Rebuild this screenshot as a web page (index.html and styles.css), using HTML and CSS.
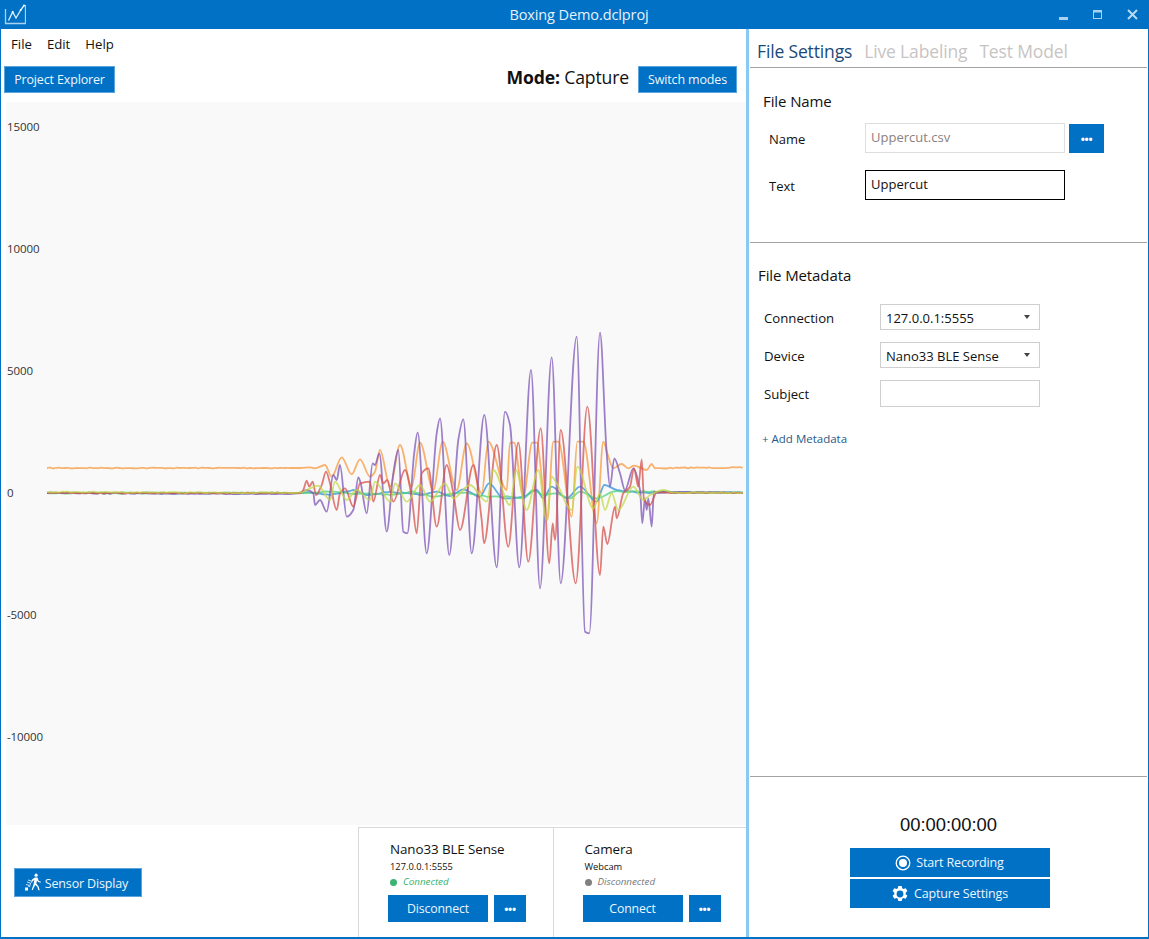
FILE: index.html
```html
<!DOCTYPE html>
<html lang="en">
<head>
<meta charset="utf-8">
<title>Boxing Demo.dclproj</title>
<link rel="stylesheet" href="styles.css">
</head>
<body>
<div class="window">
  <header class="titlebar">
    <svg class="logo" width="22" height="21" viewBox="0 0 22 21" fill="none">
      <path d="M1.500 5v14.500h20V1" stroke="#a8d2f0" stroke-width="1.300"/>
      <path d="M4.500 16.500 8.700 8 12 14l4.700-8L20 1.500" stroke="#e4f1fb" stroke-width="1.300"/>
      <circle cx="8.700" cy="8" r="1" fill="#fff"/><circle cx="16.700" cy="6" r="1" fill="#fff"/><circle cx="20" cy="1.500" r="1" fill="#fff"/>
    </svg>
    <div class="title">Boxing Demo.dclproj</div>
    <div class="winctrls">
      <svg width="10" height="10" viewBox="0 0 10 10"><rect x="0" y="7" width="9" height="3" fill="#a8d2f0"/></svg>
      <svg width="10" height="10" viewBox="0 0 10 10" fill="none" stroke="#a8d2f0"><rect x=".5" y=".5" width="8" height="8"/><rect x="0" y="0" width="9" height="2.500" fill="#a8d2f0" stroke="none"/></svg>
      <svg width="11" height="11" viewBox="0 0 11 11" fill="none" stroke="#b8daf3" stroke-width="2"><path d="M1 1l9 9M10 1l-9 9"/></svg>
    </div>
  </header>
  <main class="content">
    <section class="left">
      <nav class="menu"><span>File</span><span>Edit</span><span>Help</span></nav>
      <div class="toolbar">
        <button class="btn bordered explorer">Project Explorer</button>
        <div class="mode"><b>Mode:</b> Capture</div>
        <button class="btn bordered switch">Switch modes</button>
      </div>
      <div class="chart">
        <div class="axis"><span>15000</span><span>10000</span><span>5000</span><span>0</span><span>-5000</span><span>-10000</span></div>
        <svg id="plot" class="plot" width="740" height="723" viewBox="6 102 740 723"></svg>
      </div>
      <div class="bottom">
        <button class="btn bordered sensor">
          <svg width="18" height="20" viewBox="0 0 18 20" fill="#fff">
            <g transform="translate(2 0) scale(.88)">
              <circle cx="11.500" cy="2.500" r="1.800"/>
              <path d="M10 5h3l1.500 4 2.500 1-.5 1-3-1-1-1.500-.8 3.500 2.800 3.500 1 4h-1.500l-1-3.500-2.500-2.500-1.500 3-1.500 3-1-.5 2-6 1-5-1.800 1-1 2-1-.5 1.200-3z"/>
            </g>
            <rect x="1" y="14.500" width="3" height="3"/><path d="M2 11.500l3 .8-.4 1.400M3 9l3.500 1-.9 4M4 7l3.500 1" fill="none" stroke="#fff" stroke-width=".8"/>
          </svg>
          <span class="nudge">Sensor Display</span>
        </button>
        <div class="devices">
          <div class="device nano">
            <div class="dname">Nano33 BLE Sense</div>
            <div class="dsub">127.0.0.1:5555</div>
            <div class="dstatus on"><i></i>Connected</div>
            <div class="dbtns"><button class="btn dbtn">Disconnect</button><button class="btn more small">•••</button></div>
          </div>
          <div class="device camera">
            <div class="dname">Camera</div>
            <div class="dsub">Webcam</div>
            <div class="dstatus off"><i></i>Disconnected</div>
            <div class="dbtns"><button class="btn dbtn">Connect</button><button class="btn more small">•••</button></div>
          </div>
        </div>
      </div>
    </section>
    <div class="splitter"></div>
    <aside class="right">
      <div class="tabs"><span class="active">File Settings</span><span>Live Labeling</span><span>Test Model</span></div>
      <section class="filename">
        <h2>File Name</h2>
        <div class="namerow">
          <label>Name</label><div class="field disabled">Uppercut.csv</div><button class="btn more wide">•••</button>
        </div>
        <div class="namerow textrow">
          <label>Text</label><div class="field focus">Uppercut</div>
        </div>
      </section>
      <section class="metadata">
        <h2>File Metadata</h2>
        <div class="metagrid">
          <label>Connection</label><div class="select">127.0.0.1:5555<em></em></div>
          <label>Device</label><div class="select">Nano33 BLE Sense<em></em></div>
          <label class="subject">Subject</label><div class="select tall"></div>
        </div>
        <div class="addmeta">+ Add Metadata</div>
      </section>
      <section class="record">
        <div class="timer">00:00:00:00</div>
        <button class="btn recbtn">
          <svg width="16" height="16" viewBox="0 0 16 16"><circle cx="8" cy="8" r="6.800" fill="none" stroke="#fff" stroke-width="1.300"/><circle cx="8" cy="8" r="4" fill="#fff"/></svg>
          Start Recording
        </button>
        <button class="btn recbtn">
          <svg width="18" height="18" viewBox="0 0 18 18"><path fill="#fff" fill-rule="evenodd" d="M7.300 1h3.400l.5 2.300 1.300.7 2.200-.8 1.700 2.900-1.700 1.600v1.500l1.700 1.600-1.700 2.900-2.200-.8-1.300.8-.5 2.300H7.300l-.5-2.300-1.300-.8-2.200.8-1.700-2.900 1.700-1.600V7.700L1.600 6.100l1.700-2.900 2.200.8 1.300-.7zM9 5.600a3.400 3.400 0 1 0 0 6.800 3.400 3.400 0 0 0 0-6.800z"/></svg>
          Capture Settings
        </button>
      </section>
    </aside>
  </main>
</div>
<script src="chart.js"></script>
</body>
</html>
```
FILE: styles.css
```css
* { box-sizing: border-box; }
html, body { margin: 0; height: 100%; overflow: hidden; background: #fff; }
body { font-family: "Open Sans", "Noto Sans", sans-serif; color: #111; }
.window { width: 1149px; height: 939px; display: flex; flex-direction: column; border-left: 1px solid #0071c5; border-right: 1px solid #0071c5; border-bottom: 2px solid #0071c5; }
.titlebar { height: 29px; margin: 0 -1px; flex: none; background: #0071c5; color: #e8f2fa; display: grid; grid-template-columns: 1fr auto 1fr; align-items: center; position: relative; }
.logo { margin: 0 0 0 4px; }
.title { font-size: 14.500px; letter-spacing: -.1px; padding-left: 9px; }
.winctrls { justify-self: end; display: flex; gap: 24px; align-items: center; padding-right: 11px; }
.content { flex: 1; display: flex; min-height: 0; }
.left { width: 745px; flex: none; display: flex; flex-direction: column; }
.splitter { width: 3px; flex: none; background: #87cbf5; }
.right { flex: 1; display: flex; flex-direction: column; min-width: 0; }

.menu { height: 30px; display: flex; gap: 15px; padding: 0 0 1px 10px; align-items: center; font-size: 13.200px; }
.toolbar { height: 43px; display: flex; align-items: flex-start; padding: 7px 9px 0 3px; }
.btn { border: 0; background: #0071c5; color: #eef6fc; font-family: inherit; font-size: 12.500px; letter-spacing: -.15px; padding: 0; display: flex; align-items: center; justify-content: center; }
.bordered { border: 1px solid #5aa5de; height: 27px; }
.explorer { width: 111px; }
.mode { margin-left: auto; font-size: 17.600px; line-height: 23px; letter-spacing: -.15px; margin-right: 9px; }
.mode b { font-weight: 700; }
.switch { width: 99px; }

.chart { height: 723px; margin-left: 5px; background: #f9f9f9; position: relative; }
.axis { display: flex; flex-direction: column; padding: 16px 0 0 1px; font-size: 11.500px; letter-spacing: -.1px; color: #333; }
.axis span { height: 122px; line-height: 18px; flex: none; }
.plot { position: absolute; left: 0; top: 0; }
.plot path { fill: none; stroke-width: 1.800; stroke-linejoin: round; stroke-opacity: .75; }

.bottom { flex: 1; display: flex; min-height: 0; justify-content: space-between; }
.sensor { width: 128px; height: 29px; margin: 43px 0 0 13px; gap: 3px; padding-right: 4px; }
.nudge { padding-top: 1px; }
.devices { width: 388px; margin-top: 2px; display: flex; border-top: 1px solid #d9d9d9; border-left: 1px solid #d9d9d9; }
.device { width: 194px; padding: 13px 0 0 31px; }
.device + .device { border-left: 1px solid #d9d9d9; }
.dname { font-size: 13.400px; line-height: 17px; letter-spacing: -.1px; }
.dsub { font-size: 9.300px; line-height: 12px; margin-top: 3px; }
.dstatus { font-size: 9.800px; font-style: italic; line-height: 12px; margin-top: 3px; display: flex; align-items: center; gap: 6px; }
.dstatus i { width: 7px; height: 7px; border-radius: 50%; display: block; }
.on { color: #2fb36b; }
.on i { background: #3cb371; }
.off { color: #777; }
.off i { background: #808080; }
.dbtns { display: flex; gap: 6px; margin: 7px 0 0 -2px; }
.dbtn { width: 100px; height: 27px; font-size: 12.300px; }
.small { width: 32px; height: 27px; }
.more { font-size: 11px; font-weight: 700; letter-spacing: -.3px; color: #fff; }
.wide { width: 35px; height: 29px; margin-left: 4px; }

.tabs { height: 39px; margin: 0 1px; flex: none; border-bottom: 1px solid #a3a3a3; display: flex; gap: 12px; padding: 8px 0 0 7px; font-size: 17.500px; line-height: 28px; letter-spacing: -.15px; color: #c8c4c4; }
.tabs .active { color: #1a4a78; }
.filename { height: 175px; flex: none; margin: 0 1px; border-bottom: 1px solid #a3a3a3; padding: 23px 0 0 13px; }
h2 { margin: 0; font-size: 15px; font-weight: 400; line-height: 20px; letter-spacing: -.1px; }
.namerow { display: flex; align-items: center; margin-top: 12px; font-size: 13px; padding-left: 6px; }
label { padding-top: 2px; }
.namerow label { width: 96px; }
.textrow { margin-top: 17px; }
.field { width: 200px; height: 30px; padding: 0 5px; font-size: 13px; line-height: 26px; }
.disabled { border: 1.500px solid #dedede; color: #8a7f80; }
.focus { border: 1px solid #000; }
.metadata { flex: 1; margin: 0 1px; border-bottom: 1px solid #a3a3a3; padding: 22px 0 0 8px; min-height: 0; }
.metagrid { display: grid; grid-template-columns: 116px 160px; row-gap: 12px; padding: 0 0 0 6px; margin-top: 19px; align-items: center; font-size: 13.200px; }
.metagrid .subject { padding-top: 0; }
.select { height: 26px; border: 1px solid #cfcfcf; padding: 0 0 0 5px; line-height: 27px; position: relative; font-size: 13px; }
.tall { height: 27px; }
.select em { position: absolute; right: 9px; top: 10px; border: 3.500px solid transparent; border-top: 4px solid #444; border-bottom: 0; }
.addmeta { margin: 24px 0 0 4px; font-size: 11.500px; line-height: 16px; color: #2a5a86; }
.record { height: 160px; flex: none; display: flex; flex-direction: column; align-items: center; padding: 36px 0 0 2px; }
.timer { font-family: "Liberation Sans", sans-serif; font-size: 18.400px; line-height: 24px; margin: 0 2px 11px 0; }
.recbtn { width: 200px; height: 29px; gap: 5px; margin-bottom: 2px; font-size: 12.500px; }
```
FILE: chart.js
```js
// Sensor traces, given as key points in page coordinates and smoothed into SVG paths.
(function () {
  var Z6 = [290, 320], Z7 = [500, 320];
  function z(o, pts) { return pts.map(function (p) { return [p[0] / 3 + o[0], p[1] / 3 + o[1]]; }); }
  var series = [
    { c: '#f79a3e', p: [[47, 468], [180, 468], [290, 468]].concat(z(Z6, [[30, 444], [60, 442], [75, 445], [105, 435], [125, 470], [155, 412], [185, 463], [210, 418], [240, 470], [255, 455], [270, 390], [300, 500], [330, 375], [365, 500], [390, 368], [430, 510], [458, 365], [500, 510], [530, 370], [575, 520], [595, 365], [650, 510]])).concat(z(Z7, [[30, 368], [42, 368], [70, 530], [97, 368], [110, 368], [142, 600], [160, 365], [175, 365], [215, 590], [232, 365], [250, 365], [290, 610], [310, 365], [322, 400], [340, 445], [365, 432], [385, 445], [402, 437], [440, 450], [455, 432], [465, 445], [600, 443], [728, 443]])), n: .5 },
    { c: '#2e8fdc', p: [[47, 493], [290, 493]].concat(z(Z6, [[60, 518], [120, 525], [190, 510], [230, 525], [300, 515], [390, 525], [440, 515], [480, 528], [520, 508], [570, 530], [597, 490], [640, 535]])).concat(z(Z7, [[30, 535], [70, 530], [110, 510], [130, 535], [155, 500], [200, 535], [240, 500], [290, 545], [313, 495], [350, 510], [420, 518], [728, 518]])), n: .5 },
    { c: '#4ed17c', p: [[47, 493], [290, 493]].concat(z(Z6, [[60, 518], [130, 515], [190, 522], [240, 520], [300, 525], [370, 515], [430, 530], [480, 522], [530, 518], [590, 530]])).concat(z(Z7, [[30, 530], [70, 535], [100, 510], [130, 525], [165, 520], [210, 535], [240, 515], [290, 535], [340, 515], [420, 515], [728, 518]])), n: .5 },
    { c: '#7d55b8', p: [[47, 493], [290, 494]].concat(z(Z6, [[30, 518], [50, 510], [70, 520], [75, 555], [90, 540], [110, 575], [130, 465], [140, 480], [150, 435], [170, 590], [190, 570], [205, 472], [212, 490], [230, 580], [248, 430], [255, 435], [268, 400], [290, 635], [310, 460], [325, 390], [340, 635], [352, 640], [372, 405], [383, 338], [410, 700], [440, 340], [450, 295], [478, 705], [505, 360], [520, 298], [545, 700], [583, 285], [620, 742]])).concat(z(Z7, [[15, 275], [30, 315], [58, 742], [93, 150], [120, 805], [155, 112], [182, 790], [230, 50], [255, 935], [268, 940], [300, 38], [320, 400], [330, 500], [343, 415], [360, 460], [375, 510], [400, 445], [420, 510], [427, 610], [435, 535], [440, 570], [445, 535], [455, 620], [462, 515], [728, 519]])), n: .4 },
    { c: '#d5504c', p: [[47, 493], [290, 493]].concat(z(Z6, [[30, 520], [40, 510], [50, 482], [58, 500], [68, 485], [78, 525], [95, 495], [108, 455], [120, 490], [140, 570], [150, 520], [165, 505], [190, 560], [210, 490], [240, 485], [250, 545], [270, 465], [280, 490], [292, 480], [310, 545], [345, 450], [365, 530], [380, 640], [395, 460], [415, 445], [440, 620], [470, 435], [490, 520], [510, 630], [550, 435], [575, 600], [582, 670], [620, 375], [655, 680]])).concat(z(Z7, [[25, 680], [55, 368], [85, 725], [122, 325], [148, 730], [158, 610], [165, 660], [182, 330], [227, 790], [262, 260], [300, 765], [310, 620], [322, 672], [345, 560], [350, 595], [370, 520], [390, 500], [402, 445], [415, 500], [425, 418], [432, 540], [450, 555], [470, 518], [728, 519]])), n: .4 },
    { c: '#c3d84a', p: [[47, 492], [290, 493]].concat(z(Z6, [[30, 518], [60, 505], [85, 497], [120, 540], [135, 485], [170, 540], [200, 510], [240, 540], [255, 485], [300, 545], [315, 490], [350, 545], [390, 495], [420, 545], [465, 490], [490, 535], [540, 495], [590, 545], [610, 450], [660, 555]])).concat(z(Z7, [[48, 450], [80, 570], [115, 450], [140, 600], [155, 470], [170, 490], [215, 570], [232, 440], [280, 565], [300, 520], [315, 570], [335, 520], [355, 570], [400, 500], [430, 540], [450, 525], [490, 510], [520, 518], [728, 518]])), n: .5 }
  ];
  var seed = 7;
  function rnd() { seed = (seed * 16807) % 2147483647; return seed / 2147483647 - .5; }
  function roughen(pts, amp) {
    var out = [];
    for (var i = 0; i < pts.length - 1; i++) {
      var a = pts[i], b = pts[i + 1], steps = Math.max(1, Math.floor((b[0] - a[0]) / 3));
      if (b[0] - a[0] < 20) { out.push(a); continue; }
      for (var s = 0; s < steps; s++) {
        var t = s / steps;
        out.push([a[0] + (b[0] - a[0]) * t, a[1] + (b[1] - a[1]) * t + (s ? rnd() * amp : 0)]);
      }
    }
    out.push(pts[pts.length - 1]);
    return out;
  }
  // Monotone cubic interpolation: peaks stay where the data puts them, with no overshoot.
  function spline(pts) {
    var f = function (n) { return n.toFixed(1); };
    var sec = [], m = [], i;
    for (i = 0; i < pts.length - 1; i++) sec.push((pts[i + 1][1] - pts[i][1]) / (pts[i + 1][0] - pts[i][0]));
    m[0] = 0; m[pts.length - 1] = 0;
    for (i = 1; i < pts.length - 1; i++) {
      m[i] = sec[i - 1] * sec[i] <= 0 ? 0 : 2 * sec[i - 1] * sec[i] / (sec[i - 1] + sec[i]);
    }
    var d = 'M' + f(pts[0][0]) + ' ' + f(pts[0][1]);
    for (i = 0; i < pts.length - 1; i++) {
      var h = (pts[i + 1][0] - pts[i][0]) / 3;
      d += 'C' + f(pts[i][0] + h) + ' ' + f(pts[i][1] + m[i] * h) + ' ' +
        f(pts[i + 1][0] - h) + ' ' + f(pts[i + 1][1] - m[i + 1] * h) + ' ' +
        f(pts[i + 1][0]) + ' ' + f(pts[i + 1][1]);
    }
    return d;
  }
  var svg = document.getElementById('plot');
  series.forEach(function (s) {
    var path = document.createElementNS('http://www.w3.org/2000/svg', 'path');
    path.setAttribute('d', spline(roughen(s.p, s.n * 2)));
    path.setAttribute('stroke', s.c);
    svg.appendChild(path);
  });
})();
```
